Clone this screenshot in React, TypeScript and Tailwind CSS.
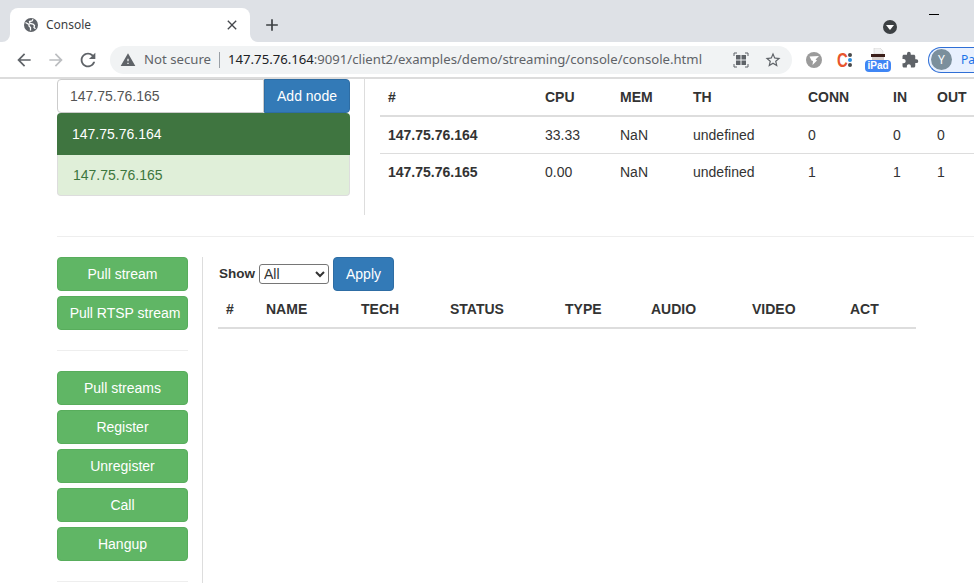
import { MdAdd, MdArrowBack, MdArrowForward, MdClose, MdExtension, MdOutlineStarBorder, MdRefresh, MdWarning } from "react-icons/md"

const nodes = [
  { host: "147.75.76.164", cpu: "33.33", mem: "NaN", th: "undefined", conn: "0", inn: "0", out: "0" },
  { host: "147.75.76.165", cpu: "0.00", mem: "NaN", th: "undefined", conn: "1", inn: "1", out: "1" },
]

function GreenButton({ label, className = "" }: { label: string; className?: string }) {
  return (
    <button className={`h-[34px] w-[131px] whitespace-nowrap rounded border border-[#58ad5c] bg-[#60b665] text-center text-sm text-white ${className}`}>
      {label}
    </button>
  )
}

function BrowserChrome() {
  return (
    <div className="h-[79px] shrink-0 border-b-2 border-[#dcdcdc]">
      <div className="flex h-[42px] items-end bg-[#dee1e6] pl-[10px]">
        <div className="relative flex h-[34px] w-[240px] items-center rounded-t-lg bg-white pl-[13px] pr-[10px] text-[#3c4043]">
          <svg width="8" height="8" viewBox="0 0 8 8" className="absolute bottom-0 left-[-8px]">
            <path d="M8 0v8H0a8 8 0 0 0 8-8z" fill="#fff" />
          </svg>
          <svg width="8" height="8" viewBox="0 0 8 8" className="absolute bottom-0 right-[-8px]">
            <path d="M0 0v8h8a8 8 0 0 1-8-8z" fill="#fff" />
          </svg>
          <svg width="14" height="14" viewBox="0 0 14 14" className="ml-[1px] shrink-0">
            <circle cx="7" cy="7" r="7" fill="#5f6368" />
            <path d="M1.5 4.5 5 6.5v1.5l1.5 1.5v3M9 1.2 8 3 5.5 3.5 6 5.5l3 .5 1.5 1.5-.5 2 1.5 1.2" fill="none" stroke="#fff" strokeWidth="1.3" />
          </svg>
          <span className="ml-[8px] flex-1 font-['Noto_Sans',sans-serif] text-xs">Console</span>
          <MdClose size={16} className="text-[#45484c]" />
        </div>
        <MdAdd size={20} className="mb-[7px] ml-[12px] text-[#3c4043]" />
        <div className="flex-1" />
        <div className="mb-[8px] flex h-[14px] w-[14px] items-center justify-center rounded-full bg-[#3c4043]">
          <div className="h-0 w-0 border-x-[4px] border-t-[5px] border-x-transparent border-t-white" />
        </div>
        <div className="ml-[32px] mr-[35px] mt-[14px] h-px w-[10px] self-start bg-black" />
      </div>
      <div className="flex h-[35px] items-center bg-white pl-[14px]">
        <MdArrowBack size={20} className="shrink-0 text-[#5f6368]" />
        <MdArrowForward size={20} className="ml-[12px] shrink-0 text-[#bcbec1]" />
        <MdRefresh size={22} className="ml-[11px] shrink-0 text-[#5f6368]" />
        <div className="ml-[11px] flex h-[28px] w-[682px] shrink-0 items-center rounded-full bg-[#f1f3f4] pl-[10px] pr-[10px] font-['Noto_Sans',sans-serif]">
          <MdWarning size={16} className="shrink-0 text-[#5f6368]" />
          <span className="ml-[8px] text-[13.2px] text-[#5f6368]">Not secure</span>
          <div className="ml-[8px] h-[16px] w-px bg-[#9aa0a6]" />
          <span className="ml-[8px] whitespace-nowrap text-[13.15px] text-[#5f6368]">
            <span className="text-[#202124]">147.75.76.164</span>:9091/client2/examples/demo/streaming/console/console.html
          </span>
          <div className="flex-1" />
          <svg width="16" height="16" viewBox="0 0 16 16" className="shrink-0 text-[#5f6368]">
            <path d="M1 4V1h3M12 1h3v3M15 12v3h-3M4 15H1v-3" fill="none" stroke="currentColor" strokeWidth="1" />
            <rect x="3" y="3" width="4.5" height="4.5" fill="currentColor" />
            <rect x="8.5" y="3" width="4.5" height="4.5" fill="currentColor" />
            <rect x="3" y="8.5" width="4.5" height="4.5" fill="currentColor" />
            <rect x="8.5" y="8.5" width="4.5" height="4.5" fill="currentColor" />
          </svg>
          <MdOutlineStarBorder size={18} className="ml-[15px] shrink-0 text-[#5f6368]" />
        </div>
        <svg width="16" height="16" viewBox="0 0 16 16" className="ml-[14px] shrink-0">
          <circle cx="8" cy="8" r="8" fill="#9b9b9b" />
          <path d="M3.5 4.5 13 4 9.5 7.5 11 8.5 6.5 13 7 9 5.5 8.5z" fill="#fff" />
        </svg>
        <span className="ml-[15px] w-[11px] shrink-0 origin-left scale-x-75 font-['Liberation_Sans',sans-serif] text-[20px] font-bold leading-none text-[#e8552d]">C</span>
        <div className="flex w-[4px] shrink-0 flex-col items-center gap-[1px]">
          <div className="h-[4px] w-[4px] rounded-full bg-[#4a4a4a]" />
          <div className="h-[4px] w-[4px] rounded-full bg-[#2c8fe0]" />
          <div className="h-[4px] w-[4px] rounded-full bg-[#4a4a4a]" />
        </div>
        <div className="ml-[14px] flex w-[24px] shrink-0 flex-col items-center">
          <svg width="16" height="12" viewBox="0 0 16 12">
            <path d="M4 0h6l3 3v3H4z" fill="#f2f2f2" stroke="#c8c8c8" strokeWidth="0.5" />
            <rect x="1" y="6" width="14" height="3" fill="#3b1f1a" />
            <rect x="2" y="9" width="12" height="3" fill="#d8d0cc" />
          </svg>
          <span className="rounded-sm bg-[#3f86f5] px-[2px] font-['Liberation_Sans',sans-serif] text-[10px] font-bold leading-[12px] text-white">iPad</span>
        </div>
        <MdExtension size={18} className="ml-[11px] shrink-0 text-[#5f6368]" />
        <div className="ml-[9px] flex h-[26px] w-[60px] shrink-0 items-center rounded-l-full border border-r-0 border-[#2f6fd6] bg-[#e8f0fe] pl-[2px]">
          <div className="flex h-[21px] w-[21px] items-center justify-center rounded-full bg-[#7b8f9c] font-['Noto_Sans',sans-serif] text-xs text-white">Y</div>
          <span className="ml-[9px] font-['Noto_Sans',sans-serif] text-xs text-[#1a73e8]">Pa</span>
        </div>
      </div>
    </div>
  )
}

function NodeTable() {
  const th = "h-[37px] border-b-2 border-[#dddddd] px-2 text-left align-middle font-bold text-[#333]"
  const td = "h-[37px] px-2 align-middle text-[#333]"
  return (
    <table className="w-[594px] shrink-0 table-fixed border-collapse text-sm">
      <thead>
        <tr>
          <th className={`${th} w-[157px]`}>#</th>
          <th className={`${th} w-[75px]`}>CPU</th>
          <th className={`${th} w-[73px]`}>MEM</th>
          <th className={`${th} w-[115px]`}>TH</th>
          <th className={`${th} w-[85px]`}>CONN</th>
          <th className={`${th} w-[44px]`}>IN</th>
          <th className={`${th} w-[45px]`}>OUT</th>
        </tr>
      </thead>
      <tbody>
        {nodes.map((n, i) => (
          <tr key={n.host} className={i === 0 ? "border-b border-[#dddddd]" : ""}>
            <td className={`${td} font-bold`}>{n.host}</td>
            <td className={td}>{n.cpu}</td>
            <td className={td}>{n.mem}</td>
            <td className={td}>{n.th}</td>
            <td className={td}>{n.conn}</td>
            <td className={td}>{n.inn}</td>
            <td className={td}>{n.out}</td>
          </tr>
        ))}
      </tbody>
    </table>
  )
}

function StreamTable() {
  const cols = [
    { label: "#", w: "w-[40px]" },
    { label: "NAME", w: "w-[95px]" },
    { label: "TECH", w: "w-[89px]" },
    { label: "STATUS", w: "w-[115px]" },
    { label: "TYPE", w: "w-[86px]" },
    { label: "AUDIO", w: "w-[101px]" },
    { label: "VIDEO", w: "w-[98px]" },
    { label: "ACT", w: "w-[74px]" },
  ]
  return (
    <table className="w-[698px] table-fixed border-collapse text-sm">
      <thead>
        <tr>
          {cols.map((c) => (
            <th key={c.label} className={`${c.w} h-[37px] border-b-2 border-[#dddddd] px-2 text-left font-bold text-[#333]`}>
              {c.label}
            </th>
          ))}
        </tr>
      </thead>
    </table>
  )
}

export default function App() {
  return (
    <div className="flex h-[583px] w-[974px] flex-col overflow-hidden bg-white font-['Liberation_Sans',sans-serif] text-sm text-[#333]">
      <BrowserChrome />

      <div className="pl-[57px]">
        <div className="flex h-[136px]">
          <div className="w-[293px] shrink-0">
            <div className="flex h-[34px]">
              <input
                readOnly
                value="147.75.76.165"
                className="h-[34px] w-[207px] rounded-l border border-[#cccccc] bg-white px-3 text-sm text-[#555]"
              />
              <button className="h-[34px] w-[86px] rounded-r border border-[#2e6da4] bg-[#337ab7] text-sm text-white">Add node</button>
            </div>
            <div className="flex h-[42px] items-center rounded-t bg-[#3f7540] pl-[15px] text-white">147.75.76.164</div>
            <div className="flex h-[41px] items-center rounded-b border border-t-0 border-[#dddddd] bg-[#e0efd9] pl-[15px] text-[#3c763d]">147.75.76.165</div>
          </div>
          <div className="ml-[14px] w-px bg-[#dddddd]" />
          <div className="ml-[15px]">
            <NodeTable />
          </div>
        </div>

        <hr className="mt-[21px] border-t border-[#eeeeee]" />

        <div className="mt-[20px] flex">
          <div className="w-[131px] shrink-0">
            <div className="flex flex-col gap-[5px]">
              <GreenButton label="Pull stream" />
              <GreenButton label="Pull RTSP stream" className="pl-[5px]" />
            </div>
            <hr className="my-[20px] border-t border-[#eeeeee]" />
            <div className="flex flex-col gap-[5px]">
              <GreenButton label="Pull streams" />
              <GreenButton label="Register" />
              <GreenButton label="Unregister" />
              <GreenButton label="Call" />
              <GreenButton label="Hangup" />
            </div>
            <hr className="mt-[20px] border-t border-[#eeeeee]" />
          </div>
          <div className="ml-[14px] h-[400px] w-px bg-[#dddddd]" />
          <div className="ml-[15px]">
            <div className="flex h-[34px] items-center">
              <label className="ml-[1px] text-[13.5px] font-bold">Show</label>
              <select className="ml-[4px] h-[20px] w-[70px] rounded-[3px] border border-[#767676] bg-white text-sm text-[#333]">
                <option>All</option>
              </select>
              <button className="ml-[4px] h-[34px] w-[61px] rounded border border-[#2e6da4] bg-[#337ab7] text-sm text-white">Apply</button>
            </div>
            <StreamTable />
          </div>
        </div>
      </div>
    </div>
  )
}
